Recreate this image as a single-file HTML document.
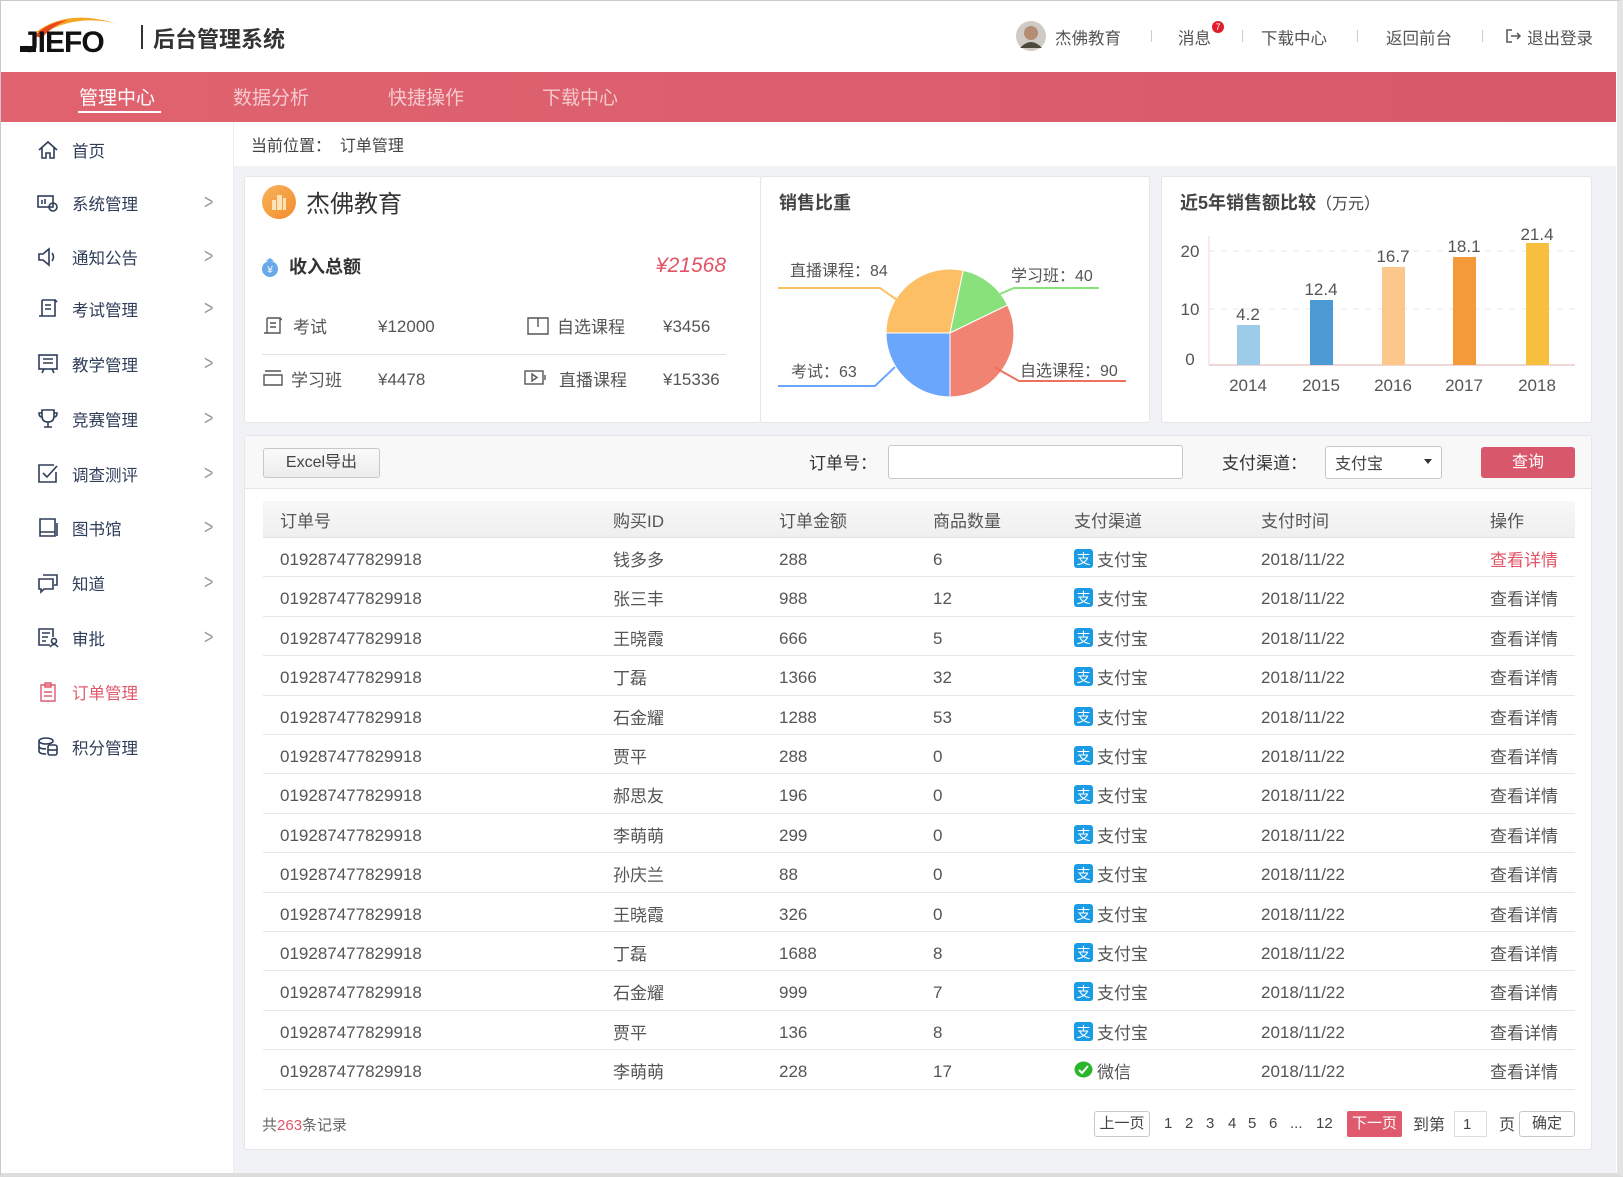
<!DOCTYPE html>
<html><head><meta charset="utf-8"><style>
*{margin:0;padding:0;box-sizing:border-box}
body{width:1623px;height:1178px;overflow:hidden;background:#fff;font-family:"Liberation Sans","Noto Sans CJK SC",sans-serif;color:#444;position:relative}
.a{position:absolute;white-space:nowrap}
.frame{position:absolute;left:0;top:0;width:1623px;height:1177px;border:1px solid #c9c9c9;border-right:6px solid #e4e4e4;border-bottom:4px solid #ddd;pointer-events:none}
.nav{position:absolute;left:1px;top:72px;width:1615px;height:50px;background:linear-gradient(90deg,#e0636f,#d65a6a)}
.nav span{position:absolute;top:11px;font-size:19px;color:#f6c9cf}
.side{position:absolute;left:1px;top:122px;width:233px;height:1052px;background:#fff;border-right:1px solid #eee}
.si{position:absolute;left:0;width:233px;height:30px;font-size:16.5px;color:#2e3d59}
.si svg{position:absolute;left:36px;top:4px}
.si b{position:absolute;left:71px;top:3px;font-weight:normal}
.si i{position:absolute;left:203px;top:7px;font-style:normal;color:#999;font-family:"Liberation Sans",sans-serif;font-size:16px;transform:scaleY(1.3)}
.main{position:absolute;left:234px;top:166px;width:1382px;height:1008px;background:#f1f2f5}
.card{position:absolute;background:#fff;border:1px solid #e6e6e6;border-radius:3px}
.row{position:absolute;left:263px;width:1312px;height:39.4px;border-bottom:1px solid #e8e8e8;font-size:17px;color:#555}
.row span{position:absolute;top:8px}
.row span.n{top:12px}
.hd span{position:absolute;top:6px;font-size:17px;color:#555}
.btn{position:absolute;border:1px solid #c8c8c8;border-radius:3px;background:linear-gradient(#fafafa,#ececec);text-align:center;font-size:16px;color:#444}
.pg{position:absolute;top:1115px;font-size:15px;color:#444}
</style></head><body>
<svg class="a" style="left:18px;top:10px" width="118" height="46" viewBox="0 0 118 46">
<path d="M18 22 Q50 -2 100 14 Q60 4 28 22Z" fill="#f5a623"/>
<path d="M16 26 Q30 12 50 10 Q34 16 24 28Z" fill="#e8461c"/>
<text x="4" y="42" font-family="Liberation Sans" font-weight="bold" font-size="30" fill="#111" letter-spacing="-1">JIEFO</text>
<rect x="2" y="36" width="16" height="6" fill="#111"/>
</svg>
<div class="a" style="left:141px;top:25px;width:2px;height:24px;background:#333"></div>
<div class="a" style="left:153px;top:22px;font-size:22px;color:#333;font-weight:bold">后台管理系统</div>
<svg class="a" style="left:1015px;top:20px" width="32" height="32"><circle cx="16" cy="16" r="15" fill="#cfcac5"/><circle cx="16" cy="13" r="7" fill="#b48c74"/><path d="M5 28 Q16 16 27 28" fill="#4a4a3a"/></svg>
<div class="a" style="left:1055px;top:25px;font-size:16.5px;color:#555">杰佛教育</div>
<div class="a" style="left:1151px;top:30px;width:1px;height:12px;background:#ccc"></div>
<div class="a" style="left:1178px;top:25px;font-size:16.5px;color:#555">消息</div>
<div class="a" style="left:1212px;top:21px;width:12px;height:12px;border-radius:6px;background:#e21b2b;color:#fff;font-size:9px;text-align:center;line-height:12px">7</div>
<div class="a" style="left:1242px;top:30px;width:1px;height:12px;background:#ccc"></div>
<div class="a" style="left:1261px;top:25px;font-size:16.5px;color:#555">下载中心</div>
<div class="a" style="left:1357px;top:30px;width:1px;height:12px;background:#ccc"></div>
<div class="a" style="left:1386px;top:25px;font-size:16.5px;color:#555">返回前台</div>
<div class="a" style="left:1482px;top:30px;width:1px;height:12px;background:#ccc"></div>
<svg class="a" style="left:1505px;top:28px" width="18" height="16" fill="none" stroke="#555" stroke-width="1.5"><path d="M7 2H2V14H7M6 8H15M12 5L15 8L12 11"/></svg>
<div class="a" style="left:1527px;top:25px;font-size:16.5px;color:#555">退出登录</div>
<div class="nav">
<span style="left:78px;color:#fff">管理中心</span>
<div class="a" style="left:77px;top:39px;width:83px;height:2px;background:#fff"></div>
<span style="left:232px">数据分析</span><span style="left:387px">快捷操作</span><span style="left:541px">下载中心</span>
</div>
<div class="side">
<div class="si" style="top:13px"><svg width="22" height="22" fill="none" stroke="#2e3d59" stroke-width="1.6"><path d="M2 11L11 3L20 11M5 9V19H9V14H13V19H17V9"/></svg><b>首页</b></div>
<div class="si" style="top:66px"><svg width="22" height="22" fill="none" stroke="#2e3d59" stroke-width="1.6"><rect x="1" y="4" width="15" height="11"/><circle cx="16" cy="15" r="4"/><path d="M5 8V12M8 7V12"/></svg><b>系统管理</b><i>&gt;</i></div>
<div class="si" style="top:120px"><svg width="22" height="22" fill="none" stroke="#2e3d59" stroke-width="1.6"><path d="M2 8H6L12 3V19L6 14H2Z M15 7Q18 11 15 15"/></svg><b>通知公告</b><i>&gt;</i></div>
<div class="si" style="top:172px"><svg width="22" height="22" fill="none" stroke="#2e3d59" stroke-width="1.6"><path d="M5 2H18V18H2M5 2V18M8 7H14M8 11H14M18 2L20 4"/></svg><b>考试管理</b><i>&gt;</i></div>
<div class="si" style="top:227px"><svg width="22" height="22" fill="none" stroke="#2e3d59" stroke-width="1.6"><rect x="2" y="2" width="18" height="14"/><path d="M6 6H16M6 10H16M7 16L5 20M15 16L17 20"/></svg><b>教学管理</b><i>&gt;</i></div>
<div class="si" style="top:282px"><svg width="22" height="22" fill="none" stroke="#2e3d59" stroke-width="1.6"><path d="M5 2H17V8Q17 14 11 14Q5 14 5 8Z M11 14V19M7 19H15M5 5H2Q2 9 5 9M17 5H20Q20 9 17 9"/></svg><b>竞赛管理</b><i>&gt;</i></div>
<div class="si" style="top:337px"><svg width="22" height="22" fill="none" stroke="#2e3d59" stroke-width="1.6"><path d="M17 2H2V19H19V9M6 10L10 14L20 3"/></svg><b>调查测评</b><i>&gt;</i></div>
<div class="si" style="top:391px"><svg width="22" height="22" fill="none" stroke="#2e3d59" stroke-width="1.6"><path d="M3 2H18V19H3ZM3 15H18M20 6V19"/></svg><b>图书馆</b><i>&gt;</i></div>
<div class="si" style="top:446px"><svg width="22" height="22" fill="none" stroke="#2e3d59" stroke-width="1.6"><path d="M6 3H20V13H17M2 7H16V17H7L4 20V17H2Z"/></svg><b>知道</b><i>&gt;</i></div>
<div class="si" style="top:501px"><svg width="22" height="22" fill="none" stroke="#2e3d59" stroke-width="1.6"><path d="M13 18H2V2H16V10M5 6H13M5 10H11M5 14H9"/><circle cx="17" cy="14" r="2.5"/><path d="M13 20Q17 15 21 20"/></svg><b>审批</b><i>&gt;</i></div>
<div class="si" style="top:555px;color:#e05a6e"><svg width="22" height="22" fill="none" stroke="#e05a6e" stroke-width="1.4"><path d="M4 4H18V20H4ZM8 2H14V6H8ZM7 11H15M7 15H15"/></svg><b>订单管理</b></div>
<div class="si" style="top:610px"><svg width="22" height="22" fill="none" stroke="#2e3d59" stroke-width="1.6"><ellipse cx="9" cy="5" rx="7" ry="3"/><path d="M2 5V15Q2 18 9 18M2 10Q2 13 9 13"/><rect x="11" y="9" width="9" height="10" rx="2"/><path d="M11 14H20"/></svg><b>积分管理</b></div>
</div>
<div class="a" style="left:251px;top:132px;font-size:16px;color:#444">当前位置：&nbsp;&nbsp;订单管理</div>
<div class="main"></div>
<div class="card" style="left:244px;top:176px;width:516px;height:247px;border-right:none"></div>
<svg class="a" style="left:262px;top:185px" width="34" height="34"><defs><linearGradient id="g1" x1="0" y1="0" x2="1" y2="1"><stop offset="0" stop-color="#f8b35c"/><stop offset="1" stop-color="#f38b2b"/></linearGradient></defs><circle cx="17" cy="17" r="17" fill="url(#g1)"/><path d="M10 25V15H14V25M15 25V10H20V25M21 25V13H24V25" fill="#ffe3b8"/></svg>
<div class="a" style="left:306px;top:184px;font-size:24px;color:#333">杰佛教育</div>
<svg class="a" style="left:261px;top:257px" width="18" height="20"><circle cx="9" cy="12" r="8" fill="#6aa8ea"/><path d="M5 4L9 1L13 4" fill="#6aa8ea"/><text x="9" y="16" font-size="10" fill="#fff" text-anchor="middle">¥</text></svg>
<div class="a" style="left:289px;top:253px;font-size:18px;color:#333;font-weight:bold">收入总额</div>
<div class="a" style="left:650px;top:254px;width:76px;text-align:right;font-size:21px;color:#e05565;font-style:italic">¥21568</div>
<svg class="a" style="left:262px;top:316px" width="20" height="20" fill="none" stroke="#555" stroke-width="1.4"><path d="M5 2H18V17H2M5 2V17M8 7H14M8 11H14M18 2L20 4"/></svg>
<div class="a" style="left:293px;top:313px;font-size:17px;color:#555">考试</div>
<div class="a" style="left:378px;top:317px;font-size:17px;color:#555">¥12000</div>
<svg class="a" style="left:527px;top:316px" width="22" height="20" fill="none" stroke="#555" stroke-width="1.4"><path d="M1 2H21V18H1ZM11 2V11"/></svg>
<div class="a" style="left:557px;top:313px;font-size:17px;color:#555">自选课程</div>
<div class="a" style="left:663px;top:317px;font-size:17px;color:#555">¥3456</div>
<div class="a" style="left:262px;top:354px;width:464px;height:1px;background:#e2e2e2"></div>
<svg class="a" style="left:262px;top:369px" width="22" height="18" fill="none" stroke="#555" stroke-width="1.4"><path d="M3 2H19M2 6H20V16H2Z"/></svg>
<div class="a" style="left:291px;top:366px;font-size:17px;color:#555">学习班</div>
<div class="a" style="left:378px;top:370px;font-size:17px;color:#555">¥4478</div>
<svg class="a" style="left:524px;top:369px" width="26" height="18" fill="none" stroke="#555" stroke-width="1.4"><rect x="1" y="2" width="18" height="13"/><path d="M8 5V12L13 8.5Z M21 6V11"/></svg>
<div class="a" style="left:559px;top:366px;font-size:17px;color:#555">直播课程</div>
<div class="a" style="left:663px;top:370px;font-size:17px;color:#555">¥15336</div>
<div class="card" style="left:760px;top:176px;width:390px;height:247px"></div>
<div class="a" style="left:779px;top:189px;font-size:18px;color:#444;font-weight:bold">销售比重</div>
<svg class="a" style="left:760px;top:176px" width="390" height="247" viewBox="760 176 390 247">
<path d="M950,333 L886,333 A64,64 0 0 1 963.3,270.4 Z" fill="#fdbf66" stroke="#fff"/>
<path d="M950,333 L963.3,270.4 A64,64 0 0 1 1007.5,305 Z" fill="#88e17b" stroke="#fff"/>
<path d="M950,333 L1007.5,305 A64,64 0 0 1 950,397 Z" fill="#f08372" stroke="#fff"/>
<path d="M950,333 L950,397 A64,64 0 0 1 886,333 Z" fill="#6aa6fb" stroke="#fff"/>
<polyline points="778,288 880,288 897,300" fill="none" stroke="#fdbf66" stroke-width="2"/>
<polyline points="1000,294 1014,288 1099,288" fill="none" stroke="#88e17b" stroke-width="2"/>
<polyline points="778,386 875,386 895,367" fill="none" stroke="#6aa6fb" stroke-width="2"/>
<polyline points="994,367 1019,381 1126,381" fill="none" stroke="#f0705e" stroke-width="2"/>
<g font-family="Liberation Sans,Noto Sans CJK SC,sans-serif" font-size="16" fill="#555">
<text x="790" y="276">直播课程：84</text><text x="1011" y="281">学习班：40</text>
<text x="791" y="377">考试：63</text><text x="1020" y="376">自选课程：90</text></g>
</svg>
<div class="card" style="left:1161px;top:176px;width:431px;height:247px"></div>
<div class="a" style="left:1180px;top:189px;font-size:18px;color:#444;font-weight:bold">近5年销售额比较<span style="font-weight:normal;font-size:16px">（万元）</span></div>
<svg class="a" style="left:1161px;top:176px" width="431" height="247" viewBox="1161 176 431 247">
<line x1="1209" y1="236" x2="1209" y2="365" stroke="#f1d6d6"/>
<line x1="1209" y1="365" x2="1575" y2="365" stroke="#f1d6d6" stroke-width="2"/>
<line x1="1209" y1="251" x2="1575" y2="251" stroke="#e8e8e8" stroke-dasharray="6,6"/>
<line x1="1209" y1="309" x2="1575" y2="309" stroke="#e8e8e8" stroke-dasharray="6,6"/>
<rect x="1237" y="325" width="23" height="40" fill="#9dcbea"/>
<rect x="1310" y="300" width="23" height="65" fill="#4b9ad3"/>
<rect x="1382" y="267" width="23" height="98" fill="#fbc78a"/>
<rect x="1453" y="257" width="23" height="108" fill="#f59a3b"/>
<rect x="1526" y="243" width="23" height="122" fill="#f7bf3e"/>
<g font-family="Liberation Sans,sans-serif" font-size="17" fill="#555" text-anchor="middle">
<text x="1248" y="320">4.2</text><text x="1321" y="295">12.4</text><text x="1393" y="262">16.7</text><text x="1464" y="252">18.1</text><text x="1537" y="240">21.4</text>
<text x="1248" y="391">2014</text><text x="1321" y="391">2015</text><text x="1393" y="391">2016</text><text x="1464" y="391">2017</text><text x="1537" y="391">2018</text>
<text x="1190" y="257">20</text><text x="1190" y="315">10</text><text x="1190" y="365">0</text></g>
</svg>
<div class="card" style="left:244px;top:435px;width:1348px;height:715px"></div>
<div class="a" style="left:245px;top:436px;width:1346px;height:53px;background:#f8f8f9;border-bottom:1px solid #e6e6e6"></div>
<div class="btn" style="left:263px;top:448px;width:117px;height:30px;line-height:28px">Excel导出</div>
<div class="a" style="left:809px;top:449px;font-size:17px;color:#333">订单号：</div>
<div class="a" style="left:888px;top:445px;width:295px;height:34px;border:1px solid #c8c8c8;border-radius:3px;background:#fff"></div>
<div class="a" style="left:1222px;top:449px;font-size:17px;color:#333">支付渠道：</div>
<div class="a" style="left:1325px;top:446px;width:117px;height:33px;border:1px solid #c8c8c8;border-radius:3px;background:#fff"></div>
<div class="a" style="left:1335px;top:450px;font-size:16px;color:#444">支付宝</div>
<div class="a" style="left:1424px;top:459px;width:0;height:0;border-left:4px solid transparent;border-right:4px solid transparent;border-top:5px solid #333"></div>
<div class="a" style="left:1481px;top:447px;width:94px;height:31px;background:#d9576a;border-radius:3px;color:#fff;font-size:16px;text-align:center;line-height:31px">查询</div>
<div class="a hd" style="left:263px;top:501px;width:1312px;height:37px;background:linear-gradient(#f8f8f8,#efefef);border-bottom:1px solid #e4e4e4">
<span style="left:17px">订单号</span><span style="left:350px">购买ID</span><span style="left:516px">订单金额</span><span style="left:670px">商品数量</span><span style="left:811px">支付渠道</span><span style="left:998px">支付时间</span><span style="left:1227px">操作</span>
</div>
<div id="rows"></div>
<div class="a" style="left:262px;top:1114px;font-size:15px;color:#666">共<span style="color:#e05565">263</span>条记录</div>
<div class="btn" style="left:1094px;top:1111px;width:56px;height:26px;line-height:24px;font-size:15px;background:#fff">上一页</div>
<div class="pg" style="left:1164px">1</div><div class="pg" style="left:1185px">2</div><div class="pg" style="left:1206px">3</div><div class="pg" style="left:1228px">4</div><div class="pg" style="left:1248px">5</div><div class="pg" style="left:1269px">6</div><div class="pg" style="left:1290px">...</div><div class="pg" style="left:1316px">12</div>
<div class="a" style="left:1347px;top:1111px;width:55px;height:26px;background:#e05a6e;color:#fff;font-size:15px;text-align:center;line-height:26px;border-radius:2px">下一页</div>
<div class="pg" style="left:1413px;top:1111px;font-size:16px">到第</div>
<div class="a" style="left:1454px;top:1111px;width:33px;height:26px;border:1px solid #ddd;font-size:15px;padding:4px 0 0 8px">1</div>
<div class="pg" style="left:1499px;top:1111px;font-size:16px">页</div>
<div class="btn" style="left:1519px;top:1111px;width:56px;height:26px;line-height:24px;font-size:15px;background:#fff">确定</div>
<div class="frame"></div>
<script>
var d=[["钱多多",288,6],["张三丰",988,12],["王晓霞",666,5],["丁磊",1366,32],["石金耀",1288,53],["贾平",288,0],["郝思友",196,0],["李萌萌",299,0],["孙庆兰",88,0],["王晓霞",326,0],["丁磊",1688,8],["石金耀",999,7],["贾平",136,8],["李萌萌",228,17]];
var h="";
d.forEach(function(r,i){
var top=538+i*39.4;
var wx=i==13;
var ic=wx?'<svg style="position:absolute;left:811px;top:11px" width="19" height="18"><ellipse cx="9.5" cy="8.5" rx="9" ry="8" fill="#2bb52b"/><path d="M5 9L8 12L14 5" stroke="#fff" stroke-width="2" fill="none"/></svg>':'<svg style="position:absolute;left:811px;top:11px" width="19" height="19"><rect width="19" height="19" rx="3" fill="#1a9be6"/><text x="9.5" y="15" font-size="14" fill="#fff" text-anchor="middle" font-family="Noto Sans CJK SC">支</text></svg>';
h+='<div class="row" style="top:'+top+'px"><span class="n" style="left:17px">019287477829918</span><span style="left:350px">'+r[0]+'</span><span class="n" style="left:516px">'+r[1]+'</span><span class="n" style="left:670px">'+r[2]+'</span>'+ic+'<span style="left:834px">'+(wx?'微信':'支付宝')+'</span><span class="n" style="left:998px">2018/11/22</span><span style="left:1227px;'+(i==0?'color:#e05565':'')+'">查看详情</span></div>';
});
document.getElementById("rows").innerHTML=h;
</script>
</body></html>
